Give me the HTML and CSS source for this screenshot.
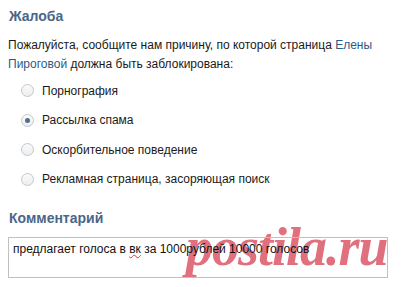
FILE: index.html
```html
<!DOCTYPE html>
<html>
<head>
<meta charset="utf-8">
<link rel="stylesheet" href="styles.css">
</head>
<body>
<div class="page">
  <h2 class="title">Жалоба</h2>
  <p class="intro">Пожалуйста, сообщите нам причину, по которой страница <a class="link" href="#">Елены</a> <a class="link" href="#">Пироговой</a> должна быть заблокирована:</p>
  <ul class="options">
    <li class="option"><span class="radio"></span>Порнография</li>
    <li class="option"><span class="radio checked"></span>Рассылка спама</li>
    <li class="option"><span class="radio"></span>Оскорбительное поведение</li>
    <li class="option"><span class="radio"></span>Рекламная страница, засоряющая поиск</li>
  </ul>
  <h2 class="title title-comment">Комментарий</h2>
  <div class="comment-wrap">
    <div class="watermark">postila.ru</div>
    <div class="comment">предлагает голоса в <span class="spell">вк</span> за 1000рублей 10000 голосов</div>
  </div>
</div>
</body>
</html>
```
FILE: styles.css
```css
html, body {
  margin: 0;
  padding: 0;
  background: #fff;
}
.page {
  width: 402px;
  height: 287px;
  overflow: hidden;
  padding: 8px 9px 0 8px;
  box-sizing: border-box;
  font-family: "Liberation Sans", Arial, sans-serif;
  font-size: 12px;
  color: #1a1a1a;
}
.title {
  margin: 0;
  font-size: 14px;
  font-weight: bold;
  color: #4a6688;
  line-height: 16px;
  padding-left: 1px;
}
.intro {
  margin: 12px 0 0 0;
  line-height: 19px;
}
.link {
  color: #2b5a87;
  text-decoration: none;
}
.options {
  list-style: none;
  margin: 2px 0 0 0;
  padding: 0 0 0 13px;
}
.option {
  display: flex;
  align-items: center;
  height: 29.5px;
  gap: 8px;
}
.radio {
  width: 11px;
  height: 11px;
  border-radius: 50%;
  border: 1px solid #c4c8cc;
  background: linear-gradient(#fafafa, #eceef0);
  box-sizing: content-box;
  position: relative;
  flex: none;
}
.radio.checked::after {
  content: "";
  position: absolute;
  left: 3px;
  top: 3px;
  width: 5px;
  height: 5px;
  border-radius: 50%;
  background: #4f6f92;
}
.title-comment {
  margin-top: 16px;
}
.comment-wrap {
  position: relative;
  margin-top: 11px;
}
.comment {
  position: relative;
  z-index: 1;
  border: 1px solid #c0c0c0;
  width: 380px;
  padding: 4px 4px;
  box-sizing: border-box;
  height: 41px;
  line-height: 14px;
  font-size: 12px;
  color: #111;
  background: transparent;
}
.spell {
  text-decoration: underline wavy #e03030;
  text-decoration-thickness: 1px;
}
.watermark {
  position: absolute;
  z-index: 0;
  left: 178px;
  top: -21px;
  font-family: "Liberation Serif", "Times New Roman", serif;
  font-style: italic;
  font-weight: bold;
  font-size: 54px;
  color: rgb(224, 112, 126);
  letter-spacing: -1px;
  white-space: nowrap;
  pointer-events: none;
}
```
